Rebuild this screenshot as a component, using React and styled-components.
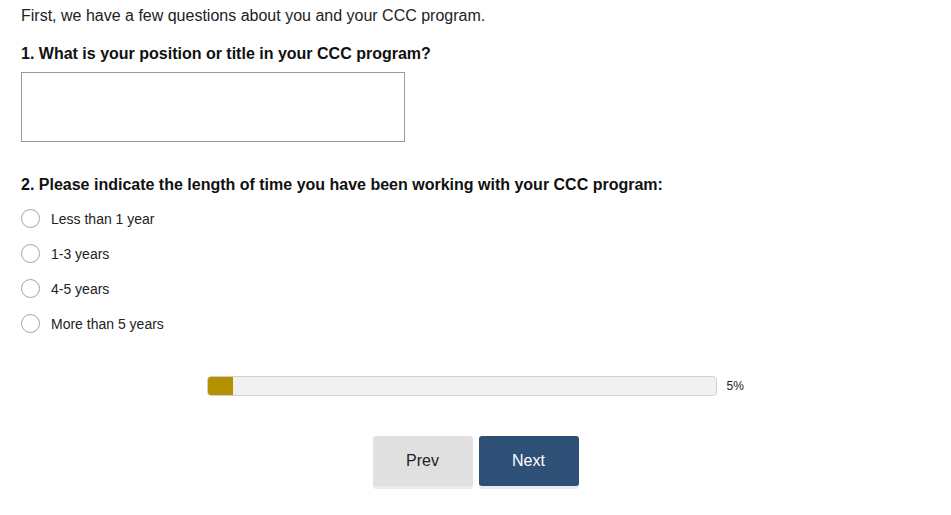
import React from 'react';
import styled, { createGlobalStyle } from 'styled-components';

const GlobalStyle = createGlobalStyle`
    body {
        margin: 0;
        background: #fff;
        font-family: Arial, "Liberation Sans", sans-serif;
        color: #111;
    }
`;

const Page = styled.div`
    padding: 7px 21px 20px;
    width: 951px;
    box-sizing: border-box;
`;

const Intro = styled.p`
    margin: 0;
    font-size: 16px;
    line-height: 18px;
    color: #222;
`;

const Question = styled.h2`
    margin: ${props => props.$top}px 0 0;
    font-size: 16px;
    line-height: 18px;
    font-weight: bold;
`;

const TextBox = styled.textarea`
    display: block;
    margin-top: 9px;
    width: 384px;
    height: 70px;
    box-sizing: border-box;
    border: 1px solid #999;
    resize: none;
    font-family: inherit;
`;

const Options = styled.div`
    margin-top: 7px;
    display: flex;
    flex-direction: column;
`;

const Option = styled.label`
    display: flex;
    align-items: center;
    height: 35px;
    font-size: 14px;
    color: #222;
`;

const Radio = styled.span`
    width: 19px;
    height: 19px;
    box-sizing: border-box;
    border: 1px solid #a3a3a3;
    border-radius: 50%;
    margin-right: 11px;
    background: #fff;
`;

const ProgressRow = styled.div`
    margin: 35px auto 0;
    width: 538px;
    display: flex;
    align-items: center;
    gap: 10px;
`;

const Track = styled.div`
    flex: 1;
    height: 20px;
    box-sizing: border-box;
    border: 1px solid #cfcfcf;
    border-radius: 4px;
    background: #f1f1f1;
    overflow: hidden;
`;

const Fill = styled.div`
    height: 100%;
    background: #b39100;
`;

const Percent = styled.span`
    font-size: 12px;
    width: 18px;
    color: #222;
`;

const Buttons = styled.div`
    margin-top: 40px;
    display: flex;
    justify-content: center;
    gap: 6px;
`;

const Button = styled.button`
    width: 100px;
    height: 50px;
    border: none;
    border-radius: 3px;
    font-family: inherit;
    font-size: 16px;
    background: ${props => props.$primary ? '#2e5077' : '#e0e0e0'};
    color: ${props => props.$primary ? '#fff' : '#222'};
    box-shadow: 0 3px 0 #ebebeb;
    cursor: pointer;
`;

const options = ['Less than 1 year', '1-3 years', '4-5 years', 'More than 5 years'];

export default function App() {
    const progress = 5;
    return (
        <Page>
            <GlobalStyle />
            <Intro>First, we have a few questions about you and your CCC program.</Intro>
            <Question $top={20}>1. What is your position or title in your CCC program?</Question>
            <TextBox />
            <Question $top={34}>2. Please indicate the length of time you have been working with your CCC program:</Question>
            <Options>
                {options.map(opt => (
                    <Option key={opt}>
                        <Radio />
                        {opt}
                    </Option>
                ))}
            </Options>
            <ProgressRow>
                <Track>
                    <Fill style={{ width: `${progress}%` }} />
                </Track>
                <Percent>{progress}%</Percent>
            </ProgressRow>
            <Buttons>
                <Button>Prev</Button>
                <Button $primary>Next</Button>
            </Buttons>
        </Page>
    );
}
